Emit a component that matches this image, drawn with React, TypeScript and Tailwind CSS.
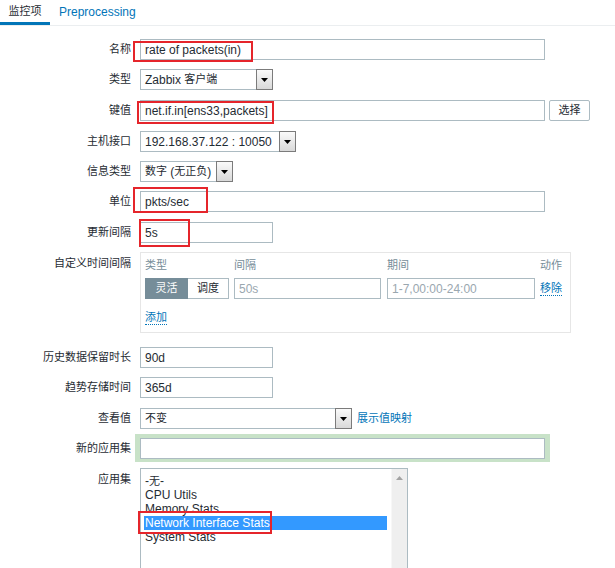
const fieldCls = 'h-[21px] border border-[#acbbc2] bg-white px-[4px] flex items-center text-[#1f2c33] whitespace-nowrap overflow-hidden'

function Label({ children, top }: { children: string; top?: boolean }) {
  return (
    <div className={`w-[131px] shrink-0 text-right text-[11px] text-[#1f2c33] ${top ? 'pt-[3px]' : 'leading-[21px]'}`}>
      {children}
    </div>
  )
}

function Arrow() {
  return (
    <div className="w-[17px] h-[21px] shrink-0 border border-[#7b7b7b] bg-gradient-to-b from-[#fafafa] to-[#d9d9d9] flex items-center justify-center">
      <svg width="7" height="4" viewBox="0 0 7 4">
        <path d="M0 0h7L3.5 4z" fill="#000" />
      </svg>
    </div>
  )
}

function Select({ children, width }: { children: React.ReactNode; width: string }) {
  return (
    <div className={`flex ${width}`}>
      <div className={`${fieldCls} flex-1 border-r-0`}>{children}</div>
      <Arrow />
    </div>
  )
}

function RedBox({ className }: { className: string }) {
  return <div className={`absolute border-2 border-[#e5252b] pointer-events-none ${className}`} />
}

const cjk = 'text-[11px]'

export default function App() {
  return (
    <div className="relative w-[615px] h-[568px] overflow-hidden bg-white text-[12px] font-['Liberation_Sans','Noto_Sans_CJK_SC',sans-serif]">
      {/* tabs */}
      <div className="flex h-[26px] border-b border-[#ebeef0]">
        <div className="w-[50px] h-[25px] border-b-[3px] border-[#0275b8] flex justify-center pt-[3px] text-[11px] text-[#1f2c33]">
          监控项
        </div>
        <div className="ml-[9px] pt-[3px] text-[#0275b8]">Preprocessing</div>
      </div>

      <div className="flex flex-col">
        <div className="flex gap-[9px] mt-[13px]">
          <Label>名称</Label>
          <div className={`${fieldCls} w-[405px]`}>rate of packets(in)</div>
        </div>
        <div className="flex gap-[9px] mt-[9px]">
          <Label>类型</Label>
          <Select width="w-[133px]">
            Zabbix&nbsp;<span className={cjk}>客户端</span>
          </Select>
        </div>
        <div className="flex gap-[9px] mt-[10px]">
          <Label>键值</Label>
          <div className={`${fieldCls} w-[405px]`}>net.if.in[ens33,packets]</div>
          <button className={`-ml-[5px] h-[21px] w-[41px] border border-[#acbbc2] rounded-[2px] bg-white text-[#1f2c33] ${cjk}`}>
            选择
          </button>
        </div>
        <div className="flex gap-[9px] mt-[10px]">
          <Label>主机接口</Label>
          <Select width="w-[156px]">192.168.37.122 : 10050</Select>
        </div>
        <div className="flex gap-[9px] mt-[9px]">
          <Label>信息类型</Label>
          <Select width="w-[93px]">
            <span className={cjk}>数字</span>&nbsp;(<span className={cjk}>无正负</span>)
          </Select>
        </div>
        <div className="flex gap-[9px] mt-[9px]">
          <Label>单位</Label>
          <div className={`${fieldCls} w-[405px]`}>pkts/sec</div>
        </div>
        <div className="flex gap-[9px] mt-[10px]">
          <Label>更新间隔</Label>
          <div className={`${fieldCls} w-[133px]`}>5s</div>
        </div>

        {/* custom intervals */}
        <div className="flex gap-[9px] mt-[9px]">
          <Label top>自定义时间间隔</Label>
          <div className="w-[431px] h-[81px] border border-[#e6e6e6] px-[4px] pt-[5px]">
            <div className={`flex h-[14px] leading-[14px] text-[#768d99] ${cjk}`}>
              <div className="w-[84px]">类型</div>
              <div className="ml-[5px] w-[147px]">间隔</div>
              <div className="ml-[6px] w-[148px]">期间</div>
              <div className="ml-[5px]">动作</div>
            </div>
            <div className="flex mt-[6px] h-[21px]">
              <div className={`w-[84px] flex ${cjk}`}>
                <div className="w-[43px] h-[21px] bg-[#768d99] border border-[#768d99] text-white flex items-center justify-center">
                  灵活
                </div>
                <div className="w-[41px] h-[21px] border border-l-0 border-[#acbbc2] text-[#1f2c33] flex items-center justify-center">
                  调度
                </div>
              </div>
              <div className={`ml-[5px] w-[147px] ${fieldCls} text-[#9aa7af]`}>50s</div>
              <div className={`ml-[6px] w-[148px] ${fieldCls} text-[#9aa7af]`}>1-7,00:00-24:00</div>
              <div className="ml-[5px] flex items-center">
                <span className={`text-[#0275b8] border-b border-dotted border-[#0275b8] leading-[13px] ${cjk}`}>移除</span>
              </div>
            </div>
            <div className="mt-[9px]">
              <span className={`text-[#0275b8] border-b border-dotted border-[#0275b8] leading-[13px] inline-block ${cjk}`}>添加</span>
            </div>
          </div>
        </div>

        <div className="flex gap-[9px] mt-[14px]">
          <Label>历史数据保留时长</Label>
          <div className={`${fieldCls} w-[133px]`}>90d</div>
        </div>
        <div className="flex gap-[9px] mt-[9px]">
          <Label>趋势存储时间</Label>
          <div className={`${fieldCls} w-[133px]`}>365d</div>
        </div>
        <div className="flex gap-[9px] mt-[10px] items-center">
          <Label>查看值</Label>
          <Select width="w-[212px]">
            <span className={cjk}>不变</span>
          </Select>
          <span className={`-ml-[4px] text-[#0275b8] ${cjk}`}>展示值映射</span>
        </div>
        <div className="flex gap-[9px] mt-[5px] items-center">
          <Label>新的应用集</Label>
          <div className="-ml-[5px] bg-[#c8e2c8] px-[5px] pt-[4px] pb-[3px]">
            <div className={`${fieldCls} w-[405px]`} />
          </div>
        </div>
        <div className="flex gap-[9px] mt-[6px]">
          <Label top>应用集</Label>
          <div className="w-[268px] h-[130px] border border-[#acbbc2] flex">
            <div className="flex-1 pt-[5px] pl-[3px] pr-[4px] text-[#1f2c33] leading-[14px]">
              <div className="px-[1px]">
                -<span className={cjk}>无</span>-
              </div>
              <div className="px-[1px]">CPU Utils</div>
              <div className="px-[1px]">Memory Stats</div>
              <div className="px-[1px] bg-[#3399ff] text-white">Network Interface Stats</div>
              <div className="px-[1px]">System Stats</div>
            </div>
            <div className="w-[16px] bg-[#efefef] border-l border-[#f7f7f7] flex justify-center pt-[7px]">
              <svg width="7" height="4" viewBox="0 0 7 4">
                <path d="M3.5 0L7 4H0z" fill="#a3a3a3" />
              </svg>
            </div>
          </div>
        </div>
      </div>

      {/* red annotation boxes */}
      <RedBox className="left-[133px] top-[41px] w-[120px] h-[21px]" />
      <RedBox className="left-[137px] top-[101px] w-[137px] h-[23px]" />
      <RedBox className="left-[133px] top-[187px] w-[75px] h-[26px]" />
      <RedBox className="left-[139px] top-[219px] w-[51px] h-[28px]" />
      <RedBox className="left-[138px] top-[511px] w-[134px] h-[23px]" />
    </div>
  )
}
